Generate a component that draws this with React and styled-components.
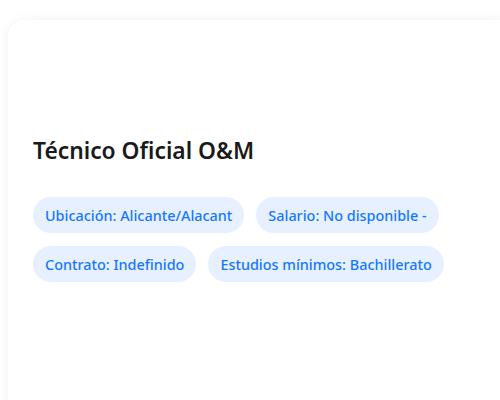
import React from "react";
import styled, { createGlobalStyle } from "styled-components";

const Global = createGlobalStyle`
  html, body { margin: 0; padding: 0; background: #ffffff; }
  body { font-family: "Noto Sans", "Open Sans", sans-serif; }
`;

const Page = styled.div`
  padding: 20px 0 0 8px;
  height: 400px;
  box-sizing: border-box;
  overflow: hidden;
`;

const Card = styled.div`
  background: #ffffff;
  border-radius: 16px;
  box-shadow: 0 0 12px rgba(0, 0, 0, 0.06);
  min-height: 420px;
  margin-right: -20px;
  padding: 115px 25px 24px 25px;
  box-sizing: border-box;
`;

const Title = styled.h1`
  margin: 0 0 30px 0;
  font-size: 22.8px;
  font-weight: 600;
  line-height: 32px;
  color: #1a1a1a;
`;

const Chips = styled.div`
  display: flex;
  flex-wrap: wrap;
  gap: 13px 12px;
  max-width: 420px;
`;

const Chip = styled.span`
  display: inline-flex;
  align-items: center;
  height: 36px;
  padding: 0 12px;
  border-radius: 18px;
  background: #e6f0ff;
  color: #1677ff;
  font-size: 14.4px;
  font-weight: 500;
  white-space: nowrap;
`;

const chips = [
  "Ubicación: Alicante/Alacant",
  "Salario: No disponible -",
  "Contrato: Indefinido",
  "Estudios mínimos: Bachillerato",
];

export default function App() {
  return (
    <>
      <Global />
      <Page>
        <Card>
          <Title>Técnico Oficial O&amp;M</Title>
          <Chips>
            {chips.map((c) => (
              <Chip key={c}>{c}</Chip>
            ))}
          </Chips>
        </Card>
      </Page>
    </>
  );
}
